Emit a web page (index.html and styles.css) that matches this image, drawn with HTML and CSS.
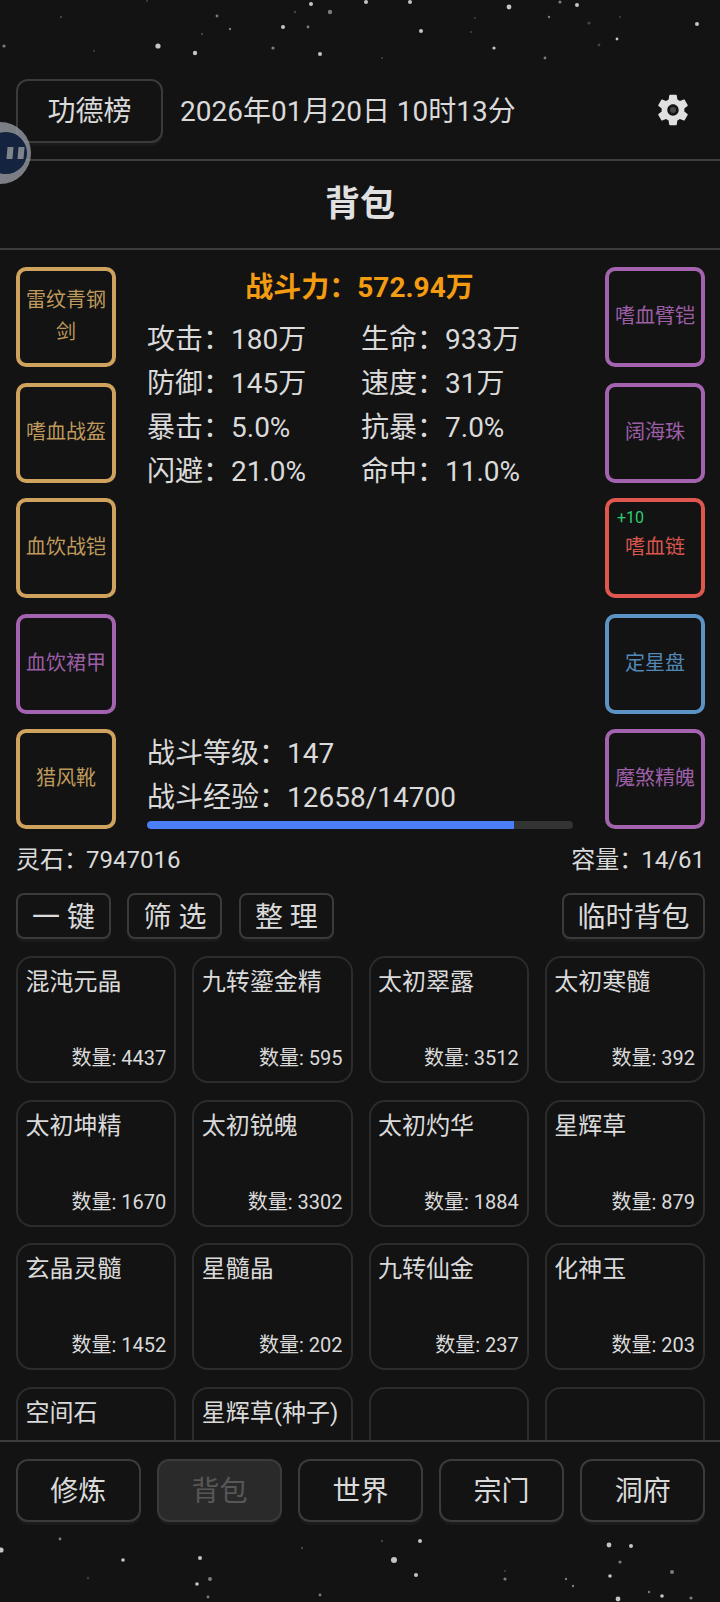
FILE: index.html

```html
<!DOCTYPE html>
<html lang="zh-CN">
<head>
    <meta charset="utf-8">
    <meta name="viewport" content="width=device-width, initial-scale=1">
    <title>背包</title>
    <link rel="stylesheet" href="styles.css">
</head>
<body>
<div class="page">
    <!-- 星空背景 -->
    <svg class="stars" width="720" height="1602" viewBox="0 0 720 1602" aria-hidden="true">
        <g class="star-b">
            <circle cx="311" cy="4" r="2"/><circle cx="366" cy="2" r="2"/><circle cx="410" cy="2" r="2"/>
            <circle cx="509" cy="7" r="2.4"/><circle cx="577" cy="5" r="2"/><circle cx="697" cy="24" r="2"/>
            <circle cx="421" cy="31" r="2"/><circle cx="494" cy="48" r="1.6"/><circle cx="320" cy="54" r="2"/>
            <circle cx="195" cy="53" r="2.2"/><circle cx="158" cy="46" r="2.6"/><circle cx="617" cy="39" r="1.4"/>
            <circle cx="283" cy="27" r="2"/><circle cx="1" cy="1550" r="2.6"/><circle cx="123" cy="1560" r="1.8"/>
            <circle cx="200" cy="1558" r="2"/><circle cx="197" cy="1584" r="1.8"/><circle cx="394" cy="1560" r="3"/>
            <circle cx="420" cy="1541" r="2"/><circle cx="416" cy="1575" r="2"/><circle cx="609" cy="1545" r="2.4"/>
            <circle cx="631" cy="1546" r="2"/><circle cx="610" cy="1576" r="1.8"/><circle cx="662" cy="1596" r="1.8"/>
            <circle cx="618" cy="1599" r="2.4"/>
        </g>
        <g class="star-m">
            <circle cx="330" cy="12" r="2.2"/><circle cx="560" cy="2" r="1.6"/><circle cx="273" cy="48" r="1.6"/>
            <circle cx="545" cy="58" r="1.4"/><circle cx="4" cy="46" r="1.6"/><circle cx="217" cy="16" r="1.4"/>
            <circle cx="230" cy="29" r="1.2"/><circle cx="308" cy="27" r="1.4"/><circle cx="549" cy="17" r="1.2"/>
            <circle cx="60" cy="1539" r="1.4"/><circle cx="210" cy="1579" r="2"/><circle cx="208" cy="1597" r="1.4"/>
            <circle cx="320" cy="1595" r="1.4"/><circle cx="505" cy="1579" r="1.6"/><circle cx="566" cy="1579" r="1.2"/>
            <circle cx="573" cy="1586" r="1.2"/><circle cx="672" cy="1572" r="2"/><circle cx="691" cy="1598" r="1.6"/>
            <circle cx="649" cy="1592" r="1.2"/><circle cx="620" cy="1562" r="1.6"/>
        </g>
        <g class="star-d">
            <circle cx="61" cy="17" r="1.2"/><circle cx="620" cy="17" r="1"/><circle cx="589" cy="23" r="1.6"/>
            <circle cx="475" cy="18" r="1"/><circle cx="471" cy="32" r="1"/><circle cx="599" cy="45" r="1.4"/>
            <circle cx="382" cy="58" r="1"/><circle cx="94" cy="51" r="1"/><circle cx="295" cy="12" r="1.2"/>
            <circle cx="202" cy="34" r="1.2"/><circle cx="147" cy="1" r="1"/><circle cx="302" cy="1548" r="1.2"/>
            <circle cx="382" cy="1541" r="1.2"/><circle cx="88" cy="1578" r="1.2"/><circle cx="505" cy="1571" r="1"/>
        </g>
    </svg>

    <div class="topbar">
        <button class="btn btn-rank">功德榜</button>
        <div class="date">2026年01月20日 10时13分</div>
        <svg class="gear" width="38" height="38" viewBox="0 0 24 24" aria-hidden="true">
            <path class="gear-body" d="M19.14 12.94c.04-.3.06-.61.06-.94 0-.32-.02-.64-.07-.94l2.03-1.58c.18-.14.23-.41.12-.61l-1.92-3.32c-.12-.22-.37-.29-.59-.22l-2.39.96c-.5-.38-1.03-.7-1.62-.94l-.36-2.54c-.04-.24-.24-.41-.48-.41h-3.84c-.24 0-.43.17-.47.41l-.36 2.54c-.59.24-1.13.57-1.62.94l-2.39-.96c-.22-.08-.47 0-.59.22L2.74 8.87c-.12.21-.08.47.12.61l2.03 1.58c-.05.3-.09.63-.09.94s.02.64.07.94l-2.03 1.58c-.18.14-.23.41-.12.61l1.92 3.32c.12.22.37.29.59.22l2.39-.96c.5.38 1.03.7 1.62.94l.36 2.54c.05.24.24.41.48.41h3.84c.24 0 .44-.17.47-.41l.36-2.54c.59-.24 1.13-.56 1.62-.94l2.39.96c.22.08.47 0 .59-.22l1.92-3.32c.12-.22.07-.47-.12-.61l-2.01-1.58zM12 15.6c-1.98 0-3.6-1.62-3.6-3.6s1.62-3.6 3.6-3.6 3.6 1.62 3.6 3.6-1.62 3.6-3.6 3.6z"/>
            <circle class="gear-core" cx="12" cy="12" r="1.9"/>
        </svg>
    </div>

    <h1 class="title">背包</h1>

    <div class="bag">
        <div class="equip">
            <div class="slots">
                <div class="slot gold">雷纹青钢剑</div>
                <div class="slot gold">嗜血战盔</div>
                <div class="slot gold">血饮战铠</div>
                <div class="slot purple">血饮裙甲</div>
                <div class="slot gold">猎风靴</div>
            </div>

            <div class="stats">
                <div class="power">战斗力：572.94万</div>
                <div class="attrs">
                    <div class="attr"><span class="attr-name">攻击：</span>180万</div>
                    <div class="attr"><span class="attr-name">生命：</span>933万</div>
                    <div class="attr"><span class="attr-name">防御：</span>145万</div>
                    <div class="attr"><span class="attr-name">速度：</span>31万</div>
                    <div class="attr"><span class="attr-name">暴击：</span>5.0%</div>
                    <div class="attr"><span class="attr-name">抗暴：</span>7.0%</div>
                    <div class="attr"><span class="attr-name">闪避：</span>21.0%</div>
                    <div class="attr"><span class="attr-name">命中：</span>11.0%</div>
                </div>
                <div class="level">
                    <div class="attr"><span class="level-name">战斗等级：</span>147</div>
                    <div class="attr"><span class="level-name">战斗经验：</span>12658/14700</div>
                    <div class="exp-bar"><div class="exp-fill" style="width: 86.1%"></div></div>
                </div>
            </div>

            <div class="slots">
                <div class="slot purple">嗜血臂铠</div>
                <div class="slot purple">阔海珠</div>
                <div class="slot red"><span class="plus">+10</span>嗜血链</div>
                <div class="slot blue">定星盘</div>
                <div class="slot purple">魔煞精魄</div>
            </div>
        </div>

        <div class="info">
            <div><span class="info-name">灵石：</span>7947016</div>
            <div><span class="info-name">容量：</span>14/61</div>
        </div>

        <div class="tools">
            <button class="btn btn-tool">一 键</button>
            <button class="btn btn-tool">筛 选</button>
            <button class="btn btn-tool">整 理</button>
            <button class="btn btn-tool btn-temp">临时背包</button>
        </div>

        <div class="items">
            <div class="item"><div class="item-name">混沌元晶</div><div class="item-num">数量: 4437</div></div>
            <div class="item"><div class="item-name">九转鎏金精</div><div class="item-num">数量: 595</div></div>
            <div class="item"><div class="item-name">太初翠露</div><div class="item-num">数量: 3512</div></div>
            <div class="item"><div class="item-name">太初寒髓</div><div class="item-num">数量: 392</div></div>
            <div class="item"><div class="item-name">太初坤精</div><div class="item-num">数量: 1670</div></div>
            <div class="item"><div class="item-name">太初锐魄</div><div class="item-num">数量: 3302</div></div>
            <div class="item"><div class="item-name">太初灼华</div><div class="item-num">数量: 1884</div></div>
            <div class="item"><div class="item-name">星辉草</div><div class="item-num">数量: 879</div></div>
            <div class="item"><div class="item-name">玄晶灵髓</div><div class="item-num">数量: 1452</div></div>
            <div class="item"><div class="item-name">星髓晶</div><div class="item-num">数量: 202</div></div>
            <div class="item"><div class="item-name">九转仙金</div><div class="item-num">数量: 237</div></div>
            <div class="item"><div class="item-name">化神玉</div><div class="item-num">数量: 203</div></div>
            <div class="item"><div class="item-name">空间石</div></div>
            <div class="item"><div class="item-name">星辉草(种子)</div></div>
            <div class="item"></div>
            <div class="item"></div>
        </div>
    </div>

    <div class="nav">
        <button class="btn btn-nav">修炼</button>
        <button class="btn btn-nav btn-off">背包</button>
        <button class="btn btn-nav">世界</button>
        <button class="btn btn-nav">宗门</button>
        <button class="btn btn-nav">洞府</button>
    </div>

    <!-- 悬浮球 -->
    <div class="ball"><div class="ball-inner"><i></i><i></i></div></div>
</div>
</body>
</html>
```

FILE: styles.css

```css
* {
    box-sizing: border-box;
}
html, body {
    margin: 0;
    padding: 0;
    background: #131313;
}
.page {
    position: relative;
    display: flex;
    flex-direction: column;
    width: 720px;
    height: 1602px;
    overflow: hidden;
    color: #dadada;
    font-family: Roboto, "Noto Sans CJK SC", sans-serif;
}

/* 星空 */
.stars {
    position: absolute;
    left: 0;
    top: 0;
    filter: blur(0.6px);
}
.star-b { fill: #c4c4c4; }
.star-m { fill: #7c7c7c; }
.star-d { fill: #444; }

/* 按钮 */
.btn {
    padding: 0 0 4px;
    border: 2px solid #3b3b3b;
    border-radius: 8px;
    background: #131313;
    box-shadow: 0 3px 1px #1b1b1b;
    color: #dadada;
    font-family: inherit;
    font-size: 28px;
}

/* 顶部 */
.topbar {
    position: relative;
    display: flex;
    align-items: center;
    height: 161px;
    padding: 80px 28px 17px 16px;
    border-bottom: 2px solid #3d3d3d;
}
.btn-rank {
    width: 147px;
    height: 64px;
    border-radius: 12px;
}
.date {
    margin-left: 17px;
    padding-bottom: 5px;
    font-size: 28px;
}
.gear {
    margin-left: auto;
    margin-bottom: 2px;
}
.gear-body {
    fill: #e0e0e0;
}
.gear-core {
    fill: #4a4a4a;
}
.title {
    position: relative;
    height: 89px;
    margin: 0;
    border-bottom: 2px solid #3d3d3d;
    color: #e0e0e0;
    font-size: 35px;
    font-weight: 700;
    line-height: 88px;
    text-align: center;
}

/* 中间 */
.bag {
    position: relative;
    flex: 1;
    min-height: 0;
    overflow: hidden;
    padding: 17px 15px 0 16px;
}
.equip {
    display: grid;
    grid-template-columns: 100px 1fr 100px;
}
.slots {
    display: flex;
    flex-direction: column;
    gap: 15.5px;
}
.slot {
    position: relative;
    display: flex;
    align-items: center;
    justify-content: center;
    height: 100px;
    padding: 0 6px 2px;
    border: 4px solid;
    border-radius: 10px;
    font-size: 20px;
    line-height: 32px;
    text-align: center;
}
.gold { border-color: #cfa35e; color: #bf9a5c; }
.purple { border-color: #a463ae; color: #9c5fa6; }
.red { border-color: #e0574f; color: #d9554d; }
.blue { border-color: #5b93c4; color: #5288b6; }
.plus {
    position: absolute;
    left: 8px;
    top: 3px;
    color: #2ecc71;
    font-size: 16px;
    line-height: 26px;
}

.stats {
    display: flex;
    flex-direction: column;
    padding: 0 32px 0 31px;
}
.power {
    margin: 0 -31px 0 -32px;
    color: #f39c12;
    font-size: 28px;
    font-weight: 700;
    line-height: 42px;
    text-align: center;
}
.attrs {
    display: grid;
    grid-template-columns: 214px 1fr;
    margin-top: 9px;
}
.attr {
    font-size: 28px;
    line-height: 44px;
    white-space: nowrap;
}
.level {
    margin-top: auto;
}
.exp-bar {
    height: 8px;
    margin-top: 1px;
    border-radius: 4px;
    background: #333;
    overflow: hidden;
}
.exp-fill {
    height: 100%;
    border-radius: 4px 0 0 4px;
    background: #4a7ff5;
}

.info {
    display: flex;
    justify-content: space-between;
    margin-top: 15px;
    font-size: 24px;
    line-height: 32px;
}
.info-name {
    margin-right: -2px;
}
.tools {
    display: flex;
    gap: 16.5px;
    margin-top: 17px;
}
.btn-tool {
    height: 46px;
    padding: 0 14px 3px;
    white-space: nowrap;
}
.btn-temp {
    margin-left: auto;
    padding: 0 13.5px 3px;
}

/* 物品 */
.items {
    display: grid;
    grid-template-columns: repeat(4, 1fr);
    gap: 16.5px 16px;
    margin-top: 17px;
}
.item {
    display: flex;
    flex-direction: column;
    justify-content: space-between;
    height: 127px;
    padding: 8px 8px 9px 7.5px;
    border: 2px solid #2c2c2c;
    border-radius: 16px;
}
.item-name {
    font-size: 24px;
    line-height: 32px;
    white-space: nowrap;
}
.item-num {
    font-size: 20px;
    line-height: 28px;
    text-align: right;
}

/* 底部 */
.nav {
    position: relative;
    display: flex;
    gap: 16.5px;
    padding: 17px 15px 80px 16px;
    border-top: 2px solid #3d3d3d;
}
.btn-nav {
    flex: 1;
    height: 63px;
    border-radius: 12px;
}
.btn-off {
    background: #2a2a2a;
    color: #575757;
}

/* 悬浮球 */
.ball {
    position: absolute;
    left: -31px;
    top: 122px;
    display: flex;
    align-items: center;
    justify-content: flex-end;
    width: 62px;
    height: 62px;
    padding-right: 4px;
    border-radius: 50%;
    background: rgba(150, 155, 162, 0.8);
}
.ball-inner {
    display: flex;
    align-items: center;
    justify-content: flex-end;
    gap: 5px;
    width: 42px;
    height: 42px;
    padding-right: 3px;
    border-radius: 50%;
    background: #14233f;
}
.ball-inner i {
    width: 6px;
    height: 12px;
    background: #7f848b;
    transform: skewX(-5deg);
}
```
